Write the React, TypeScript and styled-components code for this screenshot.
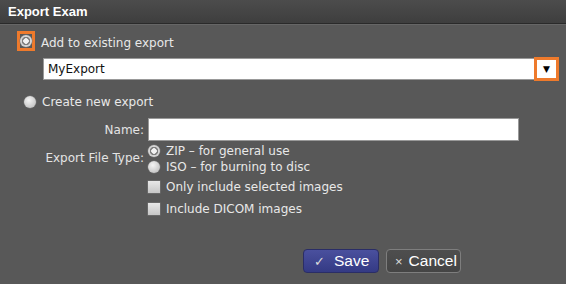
import React, { useState } from 'react';
import styled, { createGlobalStyle } from 'styled-components';

const GlobalStyle = createGlobalStyle`
  html, body {
    margin: 0;
    padding: 0;
    background: #585858;
  }
  body {
    font-family: 'DejaVu Sans', 'Noto Sans', sans-serif;
  }
`;

const Dialog = styled.main`
  width: 566px;
  height: 284px;
  background: #585858;
  display: flex;
  flex-direction: column;
  color: #e8e8e8;
  font-size: 12px;
`;

const Header = styled.header`
  height: 23px;
  display: flex;
  align-items: center;
  padding-left: 8px;
  background: linear-gradient(#4c4c4c, #3e3e3e);
  border-bottom: 1px solid #2a2a2a;
  box-shadow: 0 1px 0 #666;
  color: #fff;
  font-family: 'Liberation Sans', Arial, sans-serif;
  font-weight: bold;
  font-size: 13px;
`;

const Body = styled.section`
  display: flex;
  flex-direction: column;
  padding: 7px 0 0 17px;
`;

const OptionRow = styled.label`
  display: flex;
  align-items: center;
  gap: 6px;
  height: 20px;
`;

const OptionText = styled.span`
  padding-top: 3px;
`;

const Highlight = styled.span`
  display: flex;
  align-items: center;
  justify-content: center;
  width: 12px;
  height: 14px;
  border: 3px solid #ee7a2c;
`;

const Radio = styled.span<{ $checked?: boolean }>`
  width: 12px;
  height: 12px;
  border-radius: 50%;
  flex-shrink: 0;
  background: ${(p) =>
    p.$checked
      ? 'radial-gradient(circle, #f2f2f2 0 2.5px, #7e7e7e 3px 4px, #d4d4d4 4.5px)'
      : 'radial-gradient(circle at 40% 35%, #f4f4f4, #c8c8c8 70%, #b0b0b0)'};
  box-shadow: 0 0 0 0.5px #777;
`;

const Checkbox = styled.span`
  width: 12px;
  height: 12px;
  flex-shrink: 0;
  background: linear-gradient(#e8e8e8, #c6c6c6);
  box-shadow: 0 0 0 0.5px #7a7a7a;
`;

const SelectRow = styled.div`
  display: flex;
  margin: 7px 0 0 26px;
  width: 516px;
  height: 22px;
`;

const SelectField = styled.div`
  flex: 1;
  display: flex;
  align-items: center;
  padding-left: 4px;
  background: #fff;
  border: 1px solid #999;
  border-right: none;
  color: #111;
  font-size: 12px;
`;

const ArrowBox = styled.div`
  width: 19px;
  height: 18px;
  margin-top: -1px;
  border: 3px solid #ee7a2c;
  background: #fff;
  display: flex;
  align-items: center;
  justify-content: center;
  font-size: 9px;
  color: #000;
`;

const CreateRow = styled(OptionRow)`
  margin: 12px 0 0 7px;
`;

const Form = styled.div`
  display: grid;
  grid-template-columns: 127px 1fr;
  column-gap: 4px;
  margin-top: 6px;
`;

const FieldLabel = styled.span`
  text-align: right;
  align-self: center;
  color: #e4e4e4;
`;

const TextInput = styled.input`
  width: 371px;
  height: 23px;
  box-sizing: border-box;
  border: 1px solid #999;
  background: #fff;
  outline: none;
  margin: 0;
`;

const TypeList = styled.div`
  display: flex;
  flex-direction: column;
  margin-top: 2px;
`;

const TypeRow = styled.label`
  display: flex;
  align-items: center;
  gap: 6px;
  height: 16px;
`;

const Item = styled.label<{ $top: number }>`
  display: flex;
  align-items: center;
  gap: 6px;
  height: 14px;
  margin-top: ${(p) => p.$top}px;
`;

const Actions = styled.div`
  display: flex;
  gap: 7px;
  margin: 33px 0 0 286px;
`;

const Button = styled.button<{ $primary?: boolean }>`
  width: ${(p) => (p.$primary ? 76 : 75)}px;
  height: 24px;
  padding: 0 0 0 ${(p) => (p.$primary ? 10 : 8)}px;
  border-radius: 4px;
  font-family: 'Liberation Sans', Arial, sans-serif;
  font-size: 15.5px;
  display: flex;
  align-items: center;
  gap: ${(p) => (p.$primary ? 9 : 6)}px;
  color: #fff;
  cursor: pointer;
  border: 1px solid ${(p) => (p.$primary ? '#2a2d66' : '#7e7e7e')};
  background: ${(p) =>
    p.$primary ? 'linear-gradient(#4a509e, #343a84)' : 'linear-gradient(#4e4e4e, #454545)'};
`;

const Glyph = styled.span`
  font-size: 13px;
  color: #ddd;
`;

function App(): JSX.Element {
  const [mode, setMode] = useState<'existing' | 'new'>('existing');
  const [type, setType] = useState<'zip' | 'iso'>('zip');

  return (
    <Dialog>
      <GlobalStyle />
      <Header>Export Exam</Header>
      <Body>
        <OptionRow onClick={() => setMode('existing')}>
          <Highlight>
            <Radio $checked={mode === 'existing'} />
          </Highlight>
          <OptionText>Add to existing export</OptionText>
        </OptionRow>
        <SelectRow>
          <SelectField>MyExport</SelectField>
          <ArrowBox>▼</ArrowBox>
        </SelectRow>
        <CreateRow onClick={() => setMode('new')}>
          <Radio $checked={mode === 'new'} />
          Create new export
        </CreateRow>
        <Form>
          <FieldLabel>Name:</FieldLabel>
          <TextInput />
          <FieldLabel>Export File Type:</FieldLabel>
          <TypeList>
            <TypeRow onClick={() => setType('zip')}>
              <Radio $checked={type === 'zip'} />
              ZIP – for general use
            </TypeRow>
            <TypeRow onClick={() => setType('iso')}>
              <Radio $checked={type === 'iso'} />
              ISO – for burning to disc
            </TypeRow>
          </TypeList>
          <span />
          <Item $top={5}>
            <Checkbox />
            Only include selected images
          </Item>
          <span />
          <Item $top={8}>
            <Checkbox />
            Include DICOM images
          </Item>
        </Form>
        <Actions>
          <Button $primary>
            <Glyph>✓</Glyph>Save
          </Button>
          <Button>
            <Glyph>×</Glyph>Cancel
          </Button>
        </Actions>
      </Body>
    </Dialog>
  );
}

export default App;
